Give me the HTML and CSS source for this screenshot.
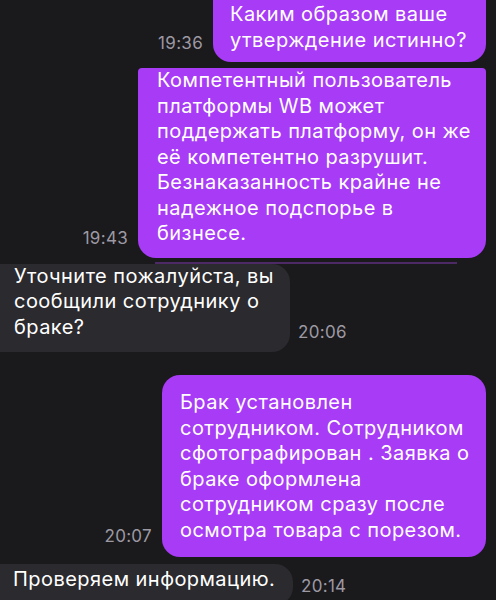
FILE: index.html
```html
<!DOCTYPE html>
<html lang="ru">
<head>
<meta charset="utf-8">
<link rel="stylesheet" href="styles.css">
</head>
<body>
<div class="chat">
  <div class="row out row-1">
    <span class="time">19:36</span>
    <div class="bubble purple b1">Каким образом ваше<br>утверждение истинно?</div>
  </div>
  <div class="row out row-2">
    <span class="time">19:43</span>
    <div class="bubble purple b2">Компетентный пользователь<br>платформы WB может<br>поддержать платформу, он же<br>её компетентно разрушит.<br>Безнаказанность крайне не<br>надежное подспорье в<br>бизнесе.</div>
  </div>
  <div class="edge"></div>
  <div class="row in row-3">
    <div class="bubble grey g1">Уточните пожалуйста, вы<br>сообщили сотруднику о<br>браке?</div>
    <span class="time">20:06</span>
  </div>
  <div class="row out row-4">
    <span class="time">20:07</span>
    <div class="bubble purple b3">Брак установлен<br>сотрудником. Сотрудником<br>сфотографирован . Заявка о<br>браке оформлена<br>сотрудником сразу после<br>осмотра товара с порезом.</div>
  </div>
  <div class="row in row-5">
    <div class="bubble grey g2">Проверяем информацию.</div>
    <span class="time">20:14</span>
  </div>
</div>
</body>
</html>
```

FILE: styles.css
```css
html, body {
  margin: 0;
  padding: 0;
  background: #1a191c;
  height: 100%;
  overflow: hidden;
}

.chat {
  display: flex;
  flex-direction: column;
  padding-right: 10px;
  font-family: "Inter", "Noto Sans", sans-serif;
  color: #ffffff;
}

.row {
  display: flex;
  align-items: flex-end;
}

.row.out {
  justify-content: flex-end;
  gap: 10px;
}

.row.in {
  justify-content: flex-start;
  gap: 8px;
}

.bubble {
  box-sizing: border-box;
  font-size: 20px;
  line-height: 25.5px;
  letter-spacing: 0.45px;
  white-space: nowrap;
}

.purple {
  background: #a73bf6;
  border-radius: 18px;
}

.grey {
  background: #2b2a2e;
  border-radius: 0 18px 18px 0;
}

.time {
  font-family: "Inter", "Noto Sans", sans-serif;
  font-size: 17px;
  line-height: 20px;
  letter-spacing: 0.3px;
  color: #9d99a3;
}

.b1 {
  width: 273px;
  padding: 2px 17px 9px;
  border-radius: 0 0 18px 18px;
}
.row-1 .time { margin-bottom: 9px; }

.row-2 { margin-top: 6px; }
.b2 {
  width: 348px;
  padding: 0 19px 11px;
  border-radius: 4px 4px 18px 18px;
}
.row-2 .time { margin-bottom: 10px; }

.edge {
  height: 2px;
  margin: 4px 29px 0 155px;
  background: #4d2a66;
}

.g1 {
  width: 290px;
  padding: 0 14px 12px;
}
.row-3 .time { margin-bottom: 10px; }

.row-4 { margin-top: 23px; }
.b3 {
  width: 324px;
  padding: 15px 18px 14px;
}
.row-4 .time { margin-bottom: 11px; }

.row-5 { margin-top: 7px; }
.g2 {
  width: 293px;
  padding: 3px 13px 12px;
}
.row-5 .time { margin-bottom: 9px; }
```
